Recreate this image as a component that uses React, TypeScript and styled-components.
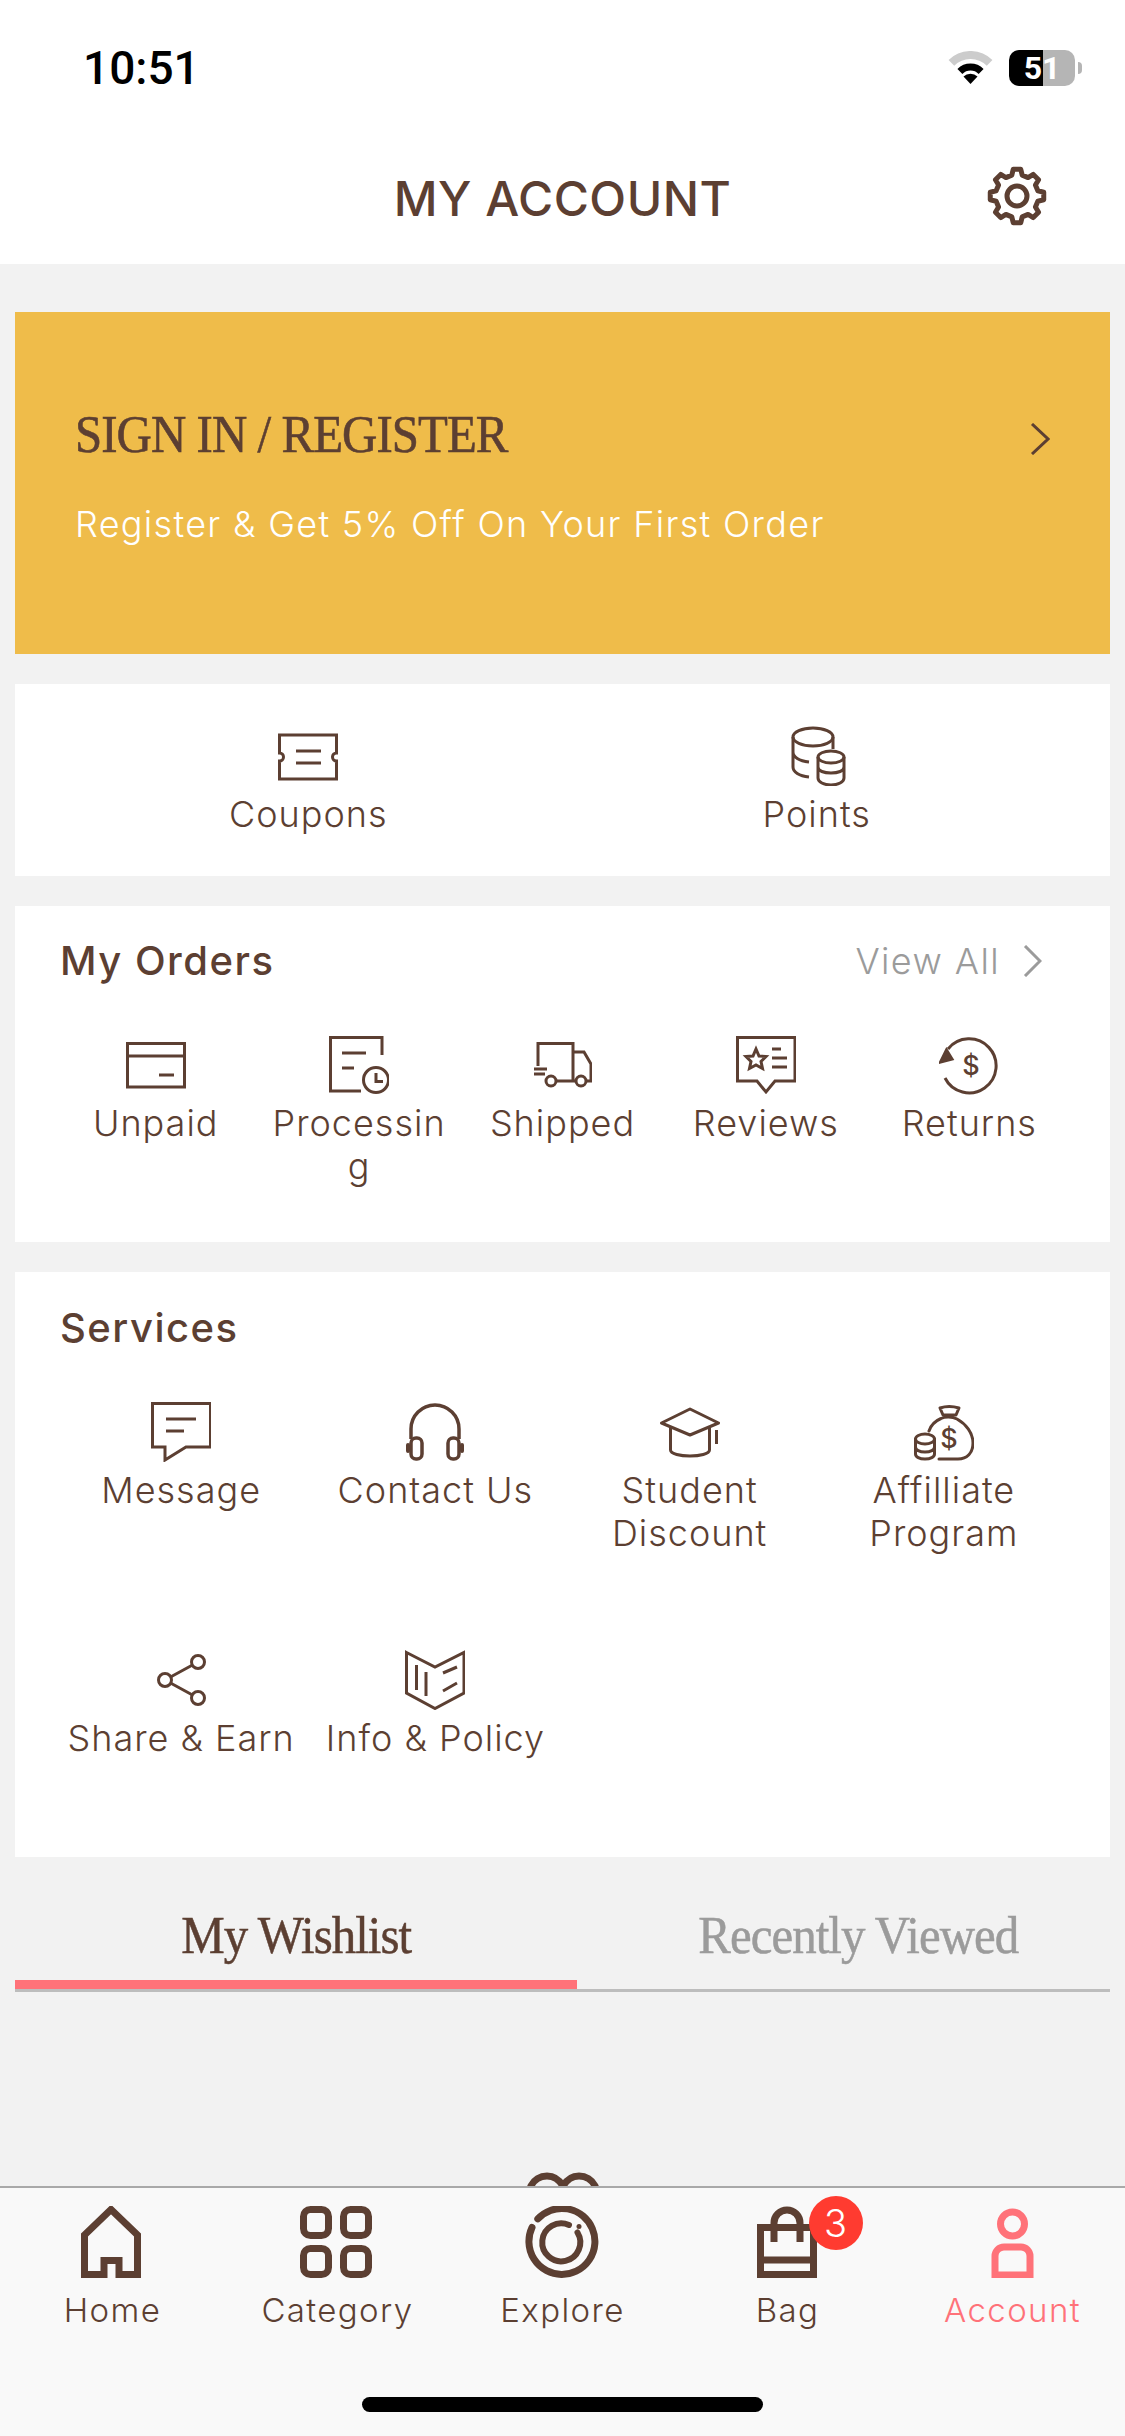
import React from "react";
import styled, { createGlobalStyle } from "styled-components";

const BROWN = "#5c3f32";
const PINK = "#ff7279";
const SANS = `Inter, "Liberation Sans", sans-serif`;
const SERIF = `"Liberation Serif", serif`;

const GlobalStyle = createGlobalStyle`
  html, body {
    margin: 0;
    padding: 0;
    background: #f2f2f2;
  }
  * {
    box-sizing: border-box;
  }
`;

// 8 toothed gear outline for the settings button
const gearPath = () => {
  const cx = 32;
  const cy = 32;
  const pt = (deg: number, r: number) => {
    const a = ((deg - 90) * Math.PI) / 180;
    return `${(cx + r * Math.cos(a)).toFixed(2)} ${(cy + r * Math.sin(a)).toFixed(2)}`;
  };
  let d = "";
  for (let i = 0; i < 8; i++) {
    const a = i * 45;
    d += `${i === 0 ? "M" : "L"}${pt(a - 14, 21.5)} L${pt(a - 8, 27)} L${pt(a + 8, 27)} L${pt(a + 14, 21.5)} `;
  }
  return d + "Z";
};

const Line = styled.svg.attrs({ width: 60, height: 60, viewBox: "0 0 60 60" })`
  display: block;
  fill: none;
  stroke: ${BROWN};
  stroke-width: 3;
`;

const Glyph = styled.text`
  fill: ${BROWN};
  stroke: none;
  font-family: ${SANS};
  font-weight: 500;
  font-size: 27px;
  text-anchor: middle;
`;

const CouponIcon = () => (
  <Line>
    <path d="M1.5 9H58.5V27a4 4 0 0 0 0 8V53H1.5V35a4 4 0 0 0 0-8Z" />
    <path d="M18 25H43M18 37H43" />
  </Line>
);

const PointsIcon = () => (
  <Line>
    <ellipse cx="26" cy="11" rx="20" ry="9" />
    <path d="M6 11V41c0 5 6 9 16 10M6 26c0 5 6 9 16 10M46 11V23" />
    <ellipse cx="44" cy="31" rx="13" ry="6" />
    <path d="M31 31V52c0 4 6 7 13 7s13-3 13-7V31M31 41c0 4 6 6 13 6s13-2 13-6" />
  </Line>
);

const UnpaidIcon = () => (
  <Line>
    <path d="M1.5 7.5H58.5V51H1.5ZM1.5 20H58.5M33 39H48" />
  </Line>
);

const ProcessingIcon = () => (
  <Line>
    <path d="M32 55H1.5V1.5H53V19M13 17H37M13 32H25" />
    <circle cx="47" cy="44" r="12.5" />
    <path d="M47 37V45.5H54" />
  </Line>
);

const ShippedIcon = () => (
  <Line>
    <path d="M6 30V7.5H41V45H25M41 16H52L59 28V45H55M41 45H43" />
    <circle cx="19" cy="45" r="5" />
    <circle cx="49" cy="45" r="5" />
    <path d="M2 33H15M2 38H13" />
  </Line>
);

const ReviewsIcon = () => (
  <Line>
    <path d="M1.5 1.5H59V45H39L30 56L21 45H1.5Z" />
    <path d="M20 13L23 20L30 20.5L25 25.5L26.5 32.5L20 29L13.5 32.5L15 25.5L10 20.5L17 20Z" />
    <path d="M36 13H45M36 22H51M36 31H51" />
  </Line>
);

const ReturnsIcon = () => (
  <Line>
    <path d="M9 13A27 27 0 1 1 6 42" />
    <path d="M7.5 14L1.5 26L13 23Z" fill={BROWN} />
    <Glyph x="32" y="39">$</Glyph>
  </Line>
);

const MessageIcon = () => (
  <Line>
    <path d="M1.5 1.5H59.5V45H35L14 58V45H1.5Z" />
    <path d="M15 17H45M15 29H33" />
  </Line>
);

const HeadphonesIcon = () => (
  <Line>
    <path d="M6 37V27a24 24 0 0 1 48 0V37" strokeWidth="3.5" />
    <rect x="6" y="36" width="11" height="21" rx="5" strokeWidth="3.5" />
    <rect x="43" y="36" width="11" height="21" rx="5" strokeWidth="3.5" />
    <path d="M3 43V49M57 43V49" strokeLinecap="round" strokeWidth="4" />
  </Line>
);

const StudentIcon = () => (
  <Line strokeLinejoin="round">
    <path d="M1.5 21L30 7L58.5 21L30 33Z" />
    <path d="M10.5 26V48c0 4 10 6 19.5 6s19.5-2 19.5-6V26M56.5 28V42" />
  </Line>
);

const AffiliateIcon = () => (
  <Line strokeLinecap="round" strokeLinejoin="round">
    <path d="M26 6Q35 3 45 6L42 13H29Z" />
    <path d="M15 29C17 23 21 19 27 16.5C31 14.5 38 14.5 43 17C52 22 59 31 59 41C59 51 53 57 44 57H25" />
    <Glyph x="35" y="46">$</Glyph>
    <ellipse cx="11" cy="37" rx="9.5" ry="5" />
    <path d="M1.5 37V52c0 3 4 5 9.5 5s9.5-2 9.5-5V37M1.5 45c0 3 4 5 9.5 5s9.5-2 9.5-5" />
  </Line>
);

const ShareIcon = () => (
  <Line>
    <circle cx="14" cy="30" r="6.5" />
    <circle cx="47" cy="12" r="6.5" />
    <circle cx="47" cy="48" r="6.5" />
    <path d="M19.5 27L41.5 15M19.5 33L41.5 45" />
  </Line>
);

const PolicyIcon = () => (
  <Line>
    <path d="M1.5 2.5L30 17L59 2.5V43L30 58.5L1.5 43Z" />
    <path d="M11.5 15V40M21 22V46M38 23L52 17M38 41L52 33" />
  </Line>
);

const BarIcon = styled.svg.attrs({ width: 80, height: 72, viewBox: "0 0 80 72" })<{ $tint?: string }>`
  display: block;
  fill: none;
  stroke: ${({ $tint }) => $tint || BROWN};
  stroke-width: 7;
`;

const HomeIcon = () => (
  <BarIcon>
    <path d="M11.5 29L38 3.5L64.5 29V68.5H46V54.5H31V68.5H11.5Z" />
  </BarIcon>
);

const CategoryIcon = () => (
  <BarIcon>
    <rect x="5.5" y="3.5" width="25" height="26" rx="7" />
    <rect x="45.5" y="3.5" width="25" height="26" rx="7" />
    <rect x="5.5" y="42.5" width="25" height="26" rx="7" />
    <rect x="45.5" y="42.5" width="25" height="26" rx="7" />
  </BarIcon>
);

const ExploreIcon = () => (
  <BarIcon strokeLinecap="round">
    <g transform="translate(2,-0.5)">
      <path d="M12.8 13.4A33 33 0 1 1 7 22" />
      <path d="M52.5 27A19 19 0 1 1 44 19.5" strokeWidth="6" />
      <circle cx="54" cy="21" r="2.5" fill={BROWN} stroke="none" />
    </g>
  </BarIcon>
);

const BagIcon = () => (
  <BarIcon>
    <path d="M12.5 21.5H65.5V68.5H12.5ZM12.5 54H65.5" />
    <path d="M26 36V17a13 13 0 0 1 26 0V36" />
  </BarIcon>
);

const AccountIcon = () => (
  <BarIcon $tint={PINK} strokeWidth="6">
    <circle cx="39.5" cy="18" r="12" />
    <path d="M22 69V50a9 9 0 0 1 9-9H48a9 9 0 0 1 9 9V69Z" />
  </BarIcon>
);

const Chevron = styled.svg.attrs({ viewBox: "0 0 20 32", fill: "none" })<{ $color: string }>`
  display: block;
  flex: none;
  width: 20px;
  height: 32px;
  stroke: ${({ $color }) => $color};
  stroke-width: 3;
`;

const coupons = [
  { label: "Coupons", icon: <CouponIcon /> },
  { label: "Points", icon: <PointsIcon /> },
];

const orders = [
  { label: "Unpaid", icon: <UnpaidIcon /> },
  { label: "Processing", icon: <ProcessingIcon /> },
  { label: "Shipped", icon: <ShippedIcon /> },
  { label: "Reviews", icon: <ReviewsIcon /> },
  { label: "Returns", icon: <ReturnsIcon /> },
];

const services = [
  { label: "Message", icon: <MessageIcon /> },
  { label: "Contact Us", icon: <HeadphonesIcon /> },
  { label: "Student Discount", icon: <StudentIcon /> },
  { label: "Affilliate Program", icon: <AffiliateIcon /> },
  { label: "Share & Earn", icon: <ShareIcon /> },
  { label: "Info & Policy", icon: <PolicyIcon /> },
];

const tabs = [
  { label: "Home", icon: <HomeIcon /> },
  { label: "Category", icon: <CategoryIcon /> },
  { label: "Explore", icon: <ExploreIcon /> },
  { label: "Bag", icon: <BagIcon />, badge: 3 },
  { label: "Account", icon: <AccountIcon />, active: true },
];

const App: React.FC = () => (
  <Screen>
    <GlobalStyle />
    <Header>
      <StatusBar>
        <Clock>10:51</Clock>
        <StatusIcons>
          <svg width="45" height="34" viewBox="0 0 45 34" fill="none">
            <path d="M3.4 11.9A27 27 0 0 1 41.6 11.9" stroke="#cccccc" strokeWidth="8" />
            <path d="M11.9 20.4A15 15 0 0 1 33.1 20.4" stroke="#000" strokeWidth="7" />
            <path d="M22.5 33L15.5 25.5A10 10 0 0 1 29.5 25.5Z" fill="#000" />
          </svg>
          <Battery>51</Battery>
          <BatteryNub />
        </StatusIcons>
      </StatusBar>
      <NavBar>
        <span />
        <Title>MY ACCOUNT</Title>
        <GearButton>
          <svg width="64" height="64" viewBox="0 0 64 64" fill="none" stroke={BROWN} strokeWidth="5" strokeLinejoin="round">
            <path d={gearPath()} />
            <circle cx="32" cy="32" r="10" />
          </svg>
        </GearButton>
      </NavBar>
    </Header>

    <Content>
      <Banner>
        <div>
          <BannerTitle>SIGN IN / REGISTER</BannerTitle>
          <BannerText>Register &amp; Get 5% Off On Your First Order</BannerText>
        </div>
        <BannerArrow>
          <Chevron $color={BROWN}>
            <path d="M2 1L18 16L2 31" />
          </Chevron>
        </BannerArrow>
      </Banner>

      <Card $height={192} $top={42}>
        <ActionGrid $cols={2}>
          {coupons.map((c) => (
            <Action key={c.label} $gap={7}>
              {c.icon}
              <ActionLabel>{c.label}</ActionLabel>
            </Action>
          ))}
        </ActionGrid>
      </Card>

      <Card $height={336} $top={31}>
        <CardHead $space={51}>
          <CardTitle>My Orders</CardTitle>
          <ViewAll>
            View All
            <Chevron $color="#9b9b9b">
              <path d="M3 1L18 16L3 31" />
            </Chevron>
          </ViewAll>
        </CardHead>
        <ActionGrid $cols={5}>
          {orders.map((o) => (
            <Action key={o.label}>
              {o.icon}
              <ActionLabel $narrow>{o.label}</ActionLabel>
            </Action>
          ))}
        </ActionGrid>
      </Card>

      <Card $height={585} $top={32}>
        <CardHead $space={50}>
          <CardTitle>Services</CardTitle>
        </CardHead>
        <ActionGrid $cols={4} $rowHeight={248}>
          {services.map((s) => (
            <Action key={s.label} $gap={7}>
              {s.icon}
              <ActionLabel>{s.label}</ActionLabel>
            </Action>
          ))}
        </ActionGrid>
      </Card>

      <TabRow>
        <Tab $active>
          <TabText>My Wishlist</TabText>
        </Tab>
        <Tab>
          <TabText>Recently Viewed</TabText>
        </Tab>
      </TabRow>

      <EmptyHeart>
        <svg width="76" height="70" viewBox="0 0 76 70" fill="none" stroke={BROWN} strokeWidth="7">
          <path d="M38 66L8 34C-2 20 8 4 22 4C30 4 35 9 38 14C41 9 46 4 54 4C68 4 78 20 68 34Z" />
        </svg>
      </EmptyHeart>
    </Content>

    <TabBar>
      <TabItems>
        {tabs.map((t) => (
          <TabItem key={t.label}>
            {t.icon}
            {t.badge ? <Badge>{t.badge}</Badge> : null}
            <TabLabel $active={t.active}>{t.label}</TabLabel>
          </TabItem>
        ))}
      </TabItems>
      <HomeIndicator />
    </TabBar>
  </Screen>
);

const Screen = styled.div`
  position: relative;
  width: 1125px;
  height: 2436px;
  overflow: hidden;
  background: #f2f2f2;
  font-family: ${SANS};
`;

const Header = styled.header`
  height: 264px;
  background: #ffffff;
`;

const StatusBar = styled.div`
  display: flex;
  align-items: center;
  justify-content: space-between;
  height: 132px;
  padding: 4px 43px 0 83px;
`;

const Clock = styled.span`
  font-family: "Roboto", sans-serif;
  font-weight: 500;
  font-size: 46px;
  color: #000000;
`;

const StatusIcons = styled.div`
  display: flex;
  align-items: center;
`;

const Battery = styled.div`
  width: 66px;
  height: 36px;
  margin-left: 16px;
  border-radius: 10px;
  background: linear-gradient(90deg, #000000 0 34px, #b5b5b5 34px 100%);
  color: #ffffff;
  font-family: "Roboto", sans-serif;
  font-weight: 700;
  font-size: 32px;
  line-height: 36px;
  text-align: center;
`;

const BatteryNub = styled.span`
  width: 4px;
  height: 12px;
  margin-left: 3px;
  border-radius: 0 6px 6px 0;
  background: #b5b5b5;
`;

const NavBar = styled.div`
  display: grid;
  grid-template-columns: 1fr auto 1fr;
  align-items: center;
  height: 132px;
`;

const Title = styled.h1`
  margin: 0;
  font-weight: 500;
  font-size: 48px;
  letter-spacing: 0.5px;
  color: ${BROWN};
`;

const GearButton = styled.div`
  justify-self: end;
  margin-right: 76px;
`;

const Content = styled.main`
  display: flex;
  flex-direction: column;
  gap: 30px;
  padding: 48px 15px 0;
`;

const Banner = styled.section`
  display: flex;
  align-items: flex-start;
  justify-content: space-between;
  height: 342px;
  padding: 93px 60px 0 60px;
  background: #efbc4a;
`;

const BannerTitle = styled.h2`
  margin: 0 0 37px;
  font-family: ${SERIF};
  font-weight: 400;
  font-size: 52px;
  line-height: 60px;
  letter-spacing: -1px;
  white-space: nowrap;
  color: ${BROWN};
  -webkit-text-stroke: 0.6px ${BROWN};
  transform: scaleX(0.94);
  transform-origin: left center;
`;

const BannerText = styled.p`
  margin: 0;
  font-weight: 300;
  font-size: 36px;
  line-height: 44px;
  letter-spacing: 1.3px;
  color: #ffffff;
`;

const BannerArrow = styled.div`
  margin-top: 18px;
`;

const Card = styled.section<{ $height: number; $top: number }>`
  height: ${({ $height }) => $height}px;
  padding-top: ${({ $top }) => $top}px;
  background: #ffffff;
`;

const CardHead = styled.div<{ $space?: number }>`
  display: flex;
  align-items: center;
  justify-content: space-between;
  height: 48px;
  margin-bottom: ${({ $space }) => $space ?? 52}px;
  padding: 0 68px 0 45px;
`;

const CardTitle = styled.h3`
  margin: 0;
  font-weight: 500;
  font-size: 40px;
  line-height: 48px;
  letter-spacing: 1.5px;
  color: ${BROWN};
`;

const ViewAll = styled.div`
  display: flex;
  align-items: center;
  gap: 22px;
  font-weight: 300;
  font-size: 36px;
  letter-spacing: 1.4px;
  color: #9b9b9b;
`;

const ActionGrid = styled.div<{ $cols: number; $rowHeight?: number }>`
  display: grid;
  grid-template-columns: repeat(${({ $cols }) => $cols}, 1fr);
  grid-auto-rows: ${({ $rowHeight }) => ($rowHeight ? `${$rowHeight}px` : "auto")};
  padding: 0 39px;
`;

const Action = styled.div<{ $gap?: number }>`
  display: flex;
  flex-direction: column;
  align-items: center;
  gap: ${({ $gap }) => $gap ?? 6}px;
`;

const ActionLabel = styled.div<{ $narrow?: boolean }>`
  width: 100%;
  padding: 0 ${({ $narrow }) => ($narrow ? "10px" : "0")};
  font-weight: 300;
  font-size: 36px;
  line-height: 43px;
  letter-spacing: 1px;
  text-align: center;
  overflow-wrap: anywhere;
  color: ${BROWN};
`;

const TabRow = styled.div`
  display: flex;
  height: 105px;
  overflow: hidden;
  border-bottom: 3px solid #bdbdbd;
`;

const Tab = styled.div<{ $active?: boolean }>`
  flex: 0 0 562px;
  height: 102px;
  padding-top: 19px;
  text-align: center;
  color: ${({ $active }) => ($active ? BROWN : "#9b9b9b")};
  border-bottom: 9px solid ${({ $active }) => ($active ? PINK : "transparent")};
`;

const TabText = styled.span`
  display: inline-block;
  font-family: ${SERIF};
  font-size: 52px;
  line-height: 60px;
  letter-spacing: -1px;
  white-space: nowrap;
  -webkit-text-stroke: 0.5px currentColor;
  transform: scaleX(0.94);
`;

const EmptyHeart = styled.div`
  display: flex;
  justify-content: center;
  margin-top: 150px;
`;

const TabBar = styled.nav`
  position: absolute;
  left: 0;
  right: 0;
  bottom: 0;
  display: flex;
  flex-direction: column;
  height: 250px;
  border-top: 2px solid #a9a9a9;
  background: #f9f9f9;
`;

const TabItems = styled.div`
  display: grid;
  grid-template-columns: repeat(5, 1fr);
  padding-top: 18px;
`;

const TabItem = styled.div`
  position: relative;
  display: flex;
  flex-direction: column;
  align-items: center;
  gap: 13px;
`;

const Badge = styled.span`
  position: absolute;
  top: -10px;
  left: calc(50% + 21px);
  width: 54px;
  height: 54px;
  border-radius: 50%;
  background: #ff3b30;
  color: #ffffff;
  font-size: 38px;
  font-weight: 300;
  line-height: 54px;
  text-align: center;
`;

const TabLabel = styled.span<{ $active?: boolean }>`
  font-weight: 300;
  font-size: 33px;
  line-height: 38px;
  letter-spacing: 1.4px;
  color: ${({ $active }) => ($active ? PINK : BROWN)};
`;

const HomeIndicator = styled.div`
  align-self: center;
  width: 401px;
  height: 15px;
  margin-top: auto;
  margin-bottom: 24px;
  border-radius: 8px;
  background: #000000;
`;

export default App;
